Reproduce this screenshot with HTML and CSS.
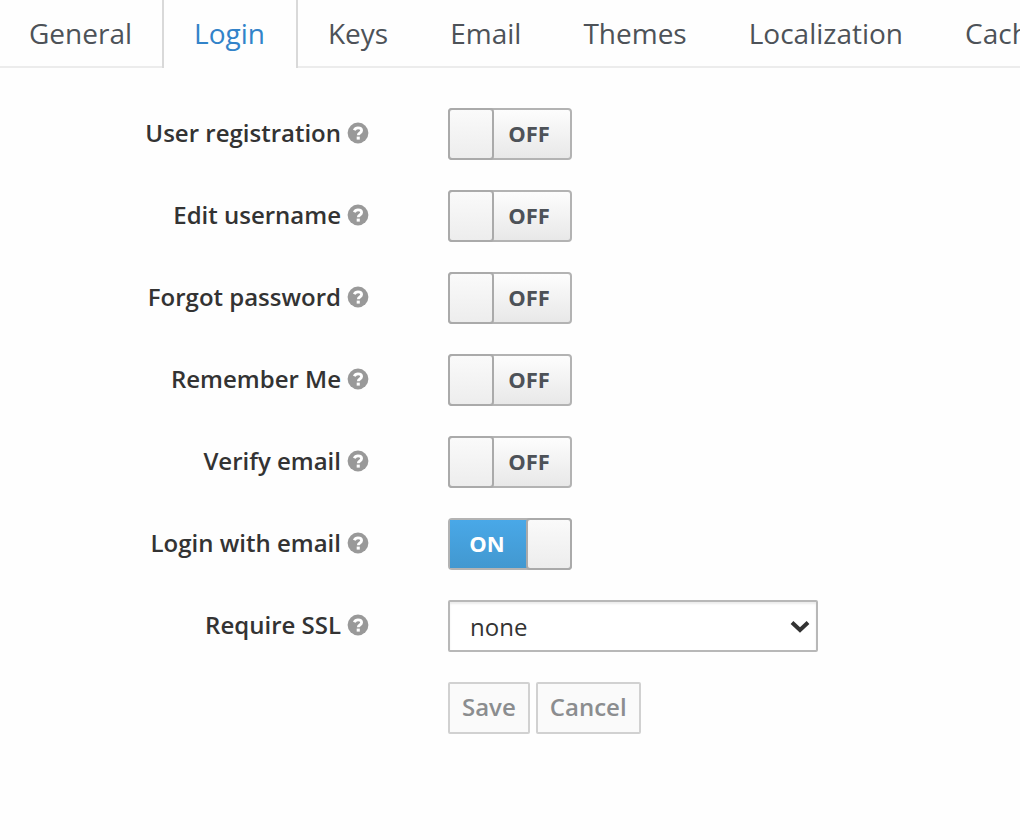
FILE: index.html
```
<!DOCTYPE html>
<html lang="en">
<head>
<meta charset="utf-8">
<meta name="viewport" content="width=device-width, initial-scale=1">
<title>Login settings</title>
<link rel="stylesheet" href="styles.css">
</head>
<body>
<svg class="sprite" aria-hidden="true">
  <symbol id="help" viewBox="0 0 22 22">
    <circle cx="11" cy="11" r="10.4" fill="#999"/>
    <path d="M7.3 8.2C8 6.5 9.3 5.8 11 5.8c2.200 0 3.600 1.100 3.600 2.800 0 2.500-3.300 2.300-3.300 4.600" fill="none" stroke="#fff" stroke-width="2.800"/>
    <path d="M9.700 14.600h3.100v3h-3.100z" fill="#fff"/>
  </symbol>
</svg>
<nav class="tabs">
  <a class="tab" href="#general">General</a>
  <a class="tab tab-active" href="#login" aria-current="page">Login</a>
  <a class="tab" href="#keys">Keys</a>
  <a class="tab" href="#email">Email</a>
  <a class="tab" href="#themes">Themes</a>
  <a class="tab" href="#localization">Localization</a>
  <a class="tab" href="#cache">Cache</a>
  <span class="tabs-rest"></span>
</nav>
<form class="form">
  <div class="row">
    <div class="name"><label for="registration">User registration</label><svg class="help"><use href="#help"/></svg></div>
    <label class="switch"><input id="registration" type="checkbox"><span class="on">ON</span><span class="knob"></span><span class="off">OFF</span></label>
  </div>
  <div class="row">
    <div class="name"><label for="username">Edit username</label><svg class="help"><use href="#help"/></svg></div>
    <label class="switch"><input id="username" type="checkbox"><span class="on">ON</span><span class="knob"></span><span class="off">OFF</span></label>
  </div>
  <div class="row">
    <div class="name"><label for="forgot">Forgot password</label><svg class="help"><use href="#help"/></svg></div>
    <label class="switch"><input id="forgot" type="checkbox"><span class="on">ON</span><span class="knob"></span><span class="off">OFF</span></label>
  </div>
  <div class="row">
    <div class="name"><label for="remember">Remember Me</label><svg class="help"><use href="#help"/></svg></div>
    <label class="switch"><input id="remember" type="checkbox"><span class="on">ON</span><span class="knob"></span><span class="off">OFF</span></label>
  </div>
  <div class="row">
    <div class="name"><label for="verify">Verify email</label><svg class="help"><use href="#help"/></svg></div>
    <label class="switch"><input id="verify" type="checkbox"><span class="on">ON</span><span class="knob"></span><span class="off">OFF</span></label>
  </div>
  <div class="row">
    <div class="name"><label for="with-email">Login with email</label><svg class="help"><use href="#help"/></svg></div>
    <label class="switch"><input id="with-email" type="checkbox" checked><span class="on">ON</span><span class="knob"></span><span class="off">OFF</span></label>
  </div>
  <div class="row">
    <div class="name"><label for="ssl">Require SSL</label><svg class="help"><use href="#help"/></svg></div>
    <div class="select-box">
      <select class="select" id="ssl">
        <option>none</option>
        <option>external requests</option>
        <option>all requests</option>
      </select>
      <svg class="chevron" viewBox="0 0 20 14" aria-hidden="true"><path d="M2 2.500l8 7.500 8-7.500" fill="none" stroke="#333" stroke-width="4"/></svg>
    </div>
  </div>
  <div class="row">
    <div class="actions">
      <button class="button" type="submit" disabled>Save</button>
      <button class="button" type="button" disabled>Cancel</button>
    </div>
  </div>
</form>
</body>
</html>
```
FILE: styles.css
```
* {
  box-sizing: border-box;
}

body {
  margin: 0;
  overflow-x: hidden;
  background: #fefefe;
  color: #333;
  font: 24px/32px "Open Sans", sans-serif;
}

.sprite {
  display: none;
}

.tabs {
  display: flex;
  overflow: hidden;
}

.tab {
  flex: none;
  height: 68px;
  padding: 13px 32px 0 30px;
  border-bottom: 2px solid #ececec;
  color: #4d5258;
  font-size: 28px;
  line-height: 40px;
  text-decoration: none;
}

.tab:first-child {
  padding: 13px 30px 0 29px;
}

.tab-active {
  padding: 13px 31px 0 30px;
  border: solid #d9d9d9;
  border-width: 0 2px;
  color: #3283c9;
}

.tabs-rest {
  flex: 1;
  border-bottom: 2px solid #ececec;
}

.form {
  display: flex;
  flex-direction: column;
  gap: 30px;
  padding: 40px 0;
}

.row {
  display: grid;
  grid-template-columns: 369px 1fr;
  column-gap: 79px;
  align-items: center;
  min-height: 52px;
}

.name {
  display: flex;
  justify-content: flex-end;
  align-items: center;
  gap: 6px;
  padding-bottom: 2px;
  font-weight: 600;
}

.help {
  width: 22px;
  height: 22px;
}

.switch {
  display: flex;
  position: relative;
  width: 124px;
  height: 52px;
  border: 2px solid #b3b3b3;
  border-radius: 4px;
  background: linear-gradient(#fdfdfd, #e8e8e8);
  color: #4d5258;
  font-size: 22px;
  font-weight: 700;
  line-height: 46px;
  text-align: center;
  cursor: pointer;
}

.switch input {
  position: absolute;
  inset: 0;
  width: 100%;
  height: 100%;
  margin: 0;
  opacity: 0;
}

.knob {
  flex: none;
  width: 46px;
  margin: -2px;
  border: 2px solid #aaa;
  border-radius: 4px;
  background: linear-gradient(#fafafa, #ededed);
}

.on,
.off {
  flex: 1;
  padding-right: 4px;
}

.on {
  display: none;
  background: linear-gradient(#49a8e8, #4298d0);
  color: #fff;
}

.switch input:checked ~ .on {
  display: block;
}

.switch input:checked ~ .off {
  display: none;
}

.select-box {
  position: relative;
  width: 370px;
  max-width: 100%;
}

.select {
  display: block;
  width: 100%;
  height: 52px;
  padding: 2px 40px 0 20px;
  border: 2px solid #b8b8b8;
  border-radius: 2px;
  background: #fff;
  box-shadow: inset 0 2px 2px rgba(0, 0, 0, 0.08);
  color: #333;
  font: inherit;
  appearance: none;
}

.chevron {
  position: absolute;
  top: 20px;
  right: 8px;
  width: 20px;
  height: 14px;
  pointer-events: none;
}

.actions {
  display: flex;
  grid-column: 2;
  gap: 6px;
}

.button {
  height: 52px;
  padding: 0 12px 2px;
  border: 2px solid #d1d1d1;
  border-radius: 2px;
  background: #fafafa;
  color: #8b8d8f;
  font: inherit;
  font-weight: 600;
}
```
